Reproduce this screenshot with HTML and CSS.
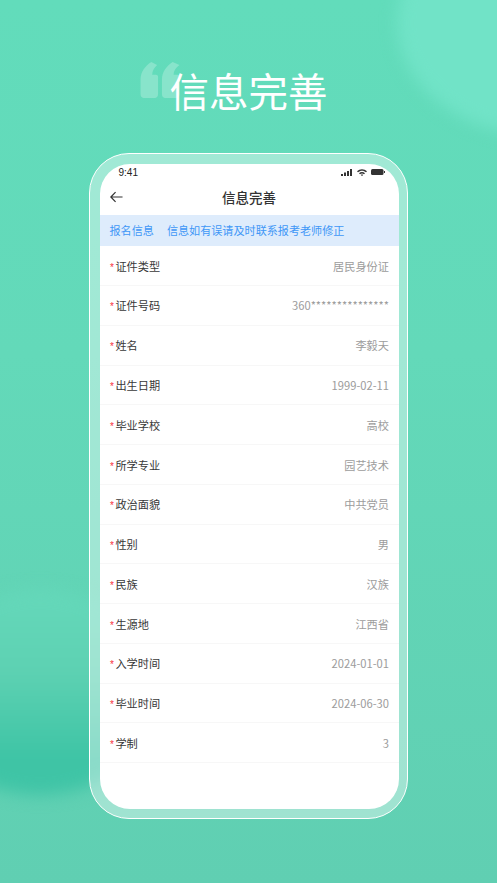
FILE: index.html
```html
<!DOCTYPE html>
<html lang="zh-CN">
<head>
<meta charset="utf-8">
<title>信息完善</title>
<link rel="stylesheet" href="styles.css">
</head>
<body>
<div class="poster">
  <div class="blob blob-top"></div>
  <div class="blob blob-left"></div>
  <header class="hero">
    <svg class="quote" viewBox="0 0 40 37" aria-hidden="true"><path d="M0 33V18C0 10 5 4 11 0l6 3c-3 3-5 6-5 10h4c1 0 2 1 2 2v18c0 2-1 4-3 4H3c-2 0-3-2-3-4zM22 33V18C22 10 27 4 33 0l7 3c-4 3-6 6-6 10h4c1 0 2 1 2 2v18c0 2-1 4-3 4H25c-2 0-3-2-3-4z"/></svg>
    <h1 class="hero-title">信息完善</h1>
  </header>
  <div class="frame">
    <main class="screen">
      <div class="status">
        <span class="time">9:41</span>
        <span class="status-icons">
          <svg class="i-signal" viewBox="0 0 12 7"><rect x="0" y="5" width="2" height="2"/><rect x="3" y="3.5" width="2" height="3.500"/><rect x="6" y="2" width="2" height="5"/><rect x="9" y="0" width="2" height="7"/></svg>
          <svg class="i-wifi" viewBox="0 0 10 7"><path d="M0 2.200C2.800-.5 7.200-.5 10 2.200L9 3.200C6.700 1.100 3.300 1.100 1 3.200zM2 4.200c1.700-1.500 4.300-1.500 6 0L7 5.200c-1.200-1-2.800-1-4 0zM3.800 5.900c.7-.5 1.700-.5 2.400 0L5 7z"/></svg>
          <svg class="i-batt" viewBox="0 0 14 6"><rect x="0" y="0" width="12.500" height="6" rx="1.500"/><rect x="13" y="2" width="1" height="2"/></svg>
        </span>
      </div>
      <div class="nav">
        <svg class="back" viewBox="0 0 14 12"><path d="M13.500 6H1M6 .8 .9 6 6 11.200" fill="none" stroke="#333" stroke-width="1.300"/></svg>
        <span class="nav-title">信息完善</span>
      </div>
      <div class="notice"><span>报名信息</span><span>信息如有误请及时联系报考老师修正</span></div>
      <ul class="rows">
        <li class="row"><span class="label">证件类型</span><span class="value">居民身份证</span></li>
        <li class="row"><span class="label">证件号码</span><span class="value">360***************</span></li>
        <li class="row"><span class="label">姓名</span><span class="value">李毅天</span></li>
        <li class="row"><span class="label">出生日期</span><span class="value">1999-02-11</span></li>
        <li class="row"><span class="label">毕业学校</span><span class="value">高校</span></li>
        <li class="row"><span class="label">所学专业</span><span class="value">园艺技术</span></li>
        <li class="row"><span class="label">政治面貌</span><span class="value">中共党员</span></li>
        <li class="row"><span class="label">性别</span><span class="value">男</span></li>
        <li class="row"><span class="label">民族</span><span class="value">汉族</span></li>
        <li class="row"><span class="label">生源地</span><span class="value">江西省</span></li>
        <li class="row"><span class="label">入学时间</span><span class="value">2024-01-01</span></li>
        <li class="row"><span class="label">毕业时间</span><span class="value">2024-06-30</span></li>
        <li class="row"><span class="label">学制</span><span class="value">3</span></li>
      </ul>
    </main>
  </div>
</div>
</body>
</html>
```
FILE: styles.css
```css
* { box-sizing: border-box; margin: 0; padding: 0; }
html, body { width: 497px; height: 883px; overflow: hidden; }
body { font-family: "Noto Sans CJK SC", "Noto Sans", sans-serif; }
.poster {
  position: relative; width: 497px; height: 883px; overflow: hidden;
  background: linear-gradient(180deg, #62dcbb 0%, #63d9b9 40%, #60cfb2 100%);
  display: flex; flex-direction: column; align-items: center;
}
.blob { position: absolute; border-radius: 50%; }
.blob-top {
  left: 397px; top: -90px; width: 280px; height: 225px;
  background: #71e3c7; filter: blur(8px);
}
.blob-left {
  left: -80px; top: 590px; width: 240px; height: 205px;
  background: linear-gradient(180deg, #65d8ba 0%, #5dd1b2 40%, #3ec4a5 82%, #40c4a6 100%);
  filter: blur(8px);
}
.hero { position: relative; height: 153px; width: 100%; }
.quote { position: absolute; left: 140px; top: 62px; width: 40px; height: 36px; fill: #88e4cb; }
.hero-title {
  position: absolute; left: 0; right: 0; top: 61px; text-align: center;
  color: #fff; font-size: 39.500px; line-height: 58px; font-weight: 400;
}
.frame {
  position: relative; width: 319px; height: 666px; padding: 9.500px 8.500px 9.500px 9.500px;
  border: 1.500px solid #fff; border-radius: 40px; background: rgba(255, 255, 255, .4);
}
.screen { width: 100%; height: 100%; background: #fff; border-radius: 30px; overflow: hidden; }
.status {
  height: 17px; display: flex; justify-content: space-between; align-items: center;
  padding: 0 14px 0 19px; color: #222;
}
.time { font-family: "Liberation Sans", sans-serif; font-size: 10px; }
.status-icons { display: flex; align-items: center; gap: 4px; }
.status-icons svg { display: block; fill: #333; }
.i-signal { width: 12px; height: 7px; }
.i-wifi { width: 10px; height: 7px; }
.i-batt { width: 14px; height: 6px; }
.nav { position: relative; height: 34px; display: flex; align-items: center; justify-content: center; }
.back { position: absolute; left: 10px; top: 10px; width: 13px; height: 12px; }
.nav-title { font-size: 13.500px; line-height: 32px; height: 34px; color: #333; font-weight: 500; }
.notice {
  height: 31.800px; background: #deecfc; color: #3f97f7; font-size: 11.100px;
  display: flex; align-items: center; gap: 13px; padding-left: 10px;
}
.rows { list-style: none; }
.row {
  height: 39.770px; padding: 0 9.500px 0 10.500px; border-bottom: 1px solid #f7f7f7;
  display: flex; justify-content: space-between; align-items: center; font-size: 11.200px;
}
.label { color: #383838; }
.label::before { content: "*"; color: #f8303c; margin-right: 1.500px; font-family: "Liberation Sans", sans-serif; font-size: 10px; }
.value { color: #9c9c9c; }
```
